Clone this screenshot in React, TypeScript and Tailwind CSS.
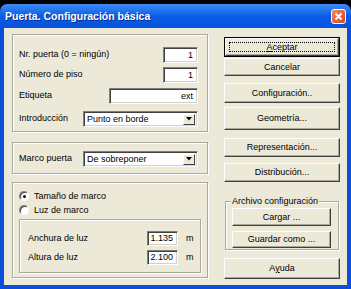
import React from 'react';

const font = { fontFamily: '"Liberation Sans", Arial, sans-serif' };

const Edit: React.FC<{ w: string; value: string; h?: string }> = ({ w, value, h = 'h-[16px]' }) => (
  <div className={`${w} ${h} box-border bg-white border border-t-[#7f7f7f] border-l-[#7f7f7f] border-b-white border-r-white shadow-[inset_1px_1px_0_#404040,inset_-1px_-1px_0_#d4d0c8] flex items-center justify-end pr-[4px] text-[9px] leading-none`}>
    {value}
  </div>
);

const Combo: React.FC<{ value: string }> = ({ value }) => (
  <div className="w-[115px] h-[16px] box-border bg-white border border-t-[#7f7f7f] border-l-[#7f7f7f] border-b-white border-r-white shadow-[inset_1px_1px_0_#404040,inset_-1px_-1px_0_#d4d0c8] flex items-center pl-[3px] pr-[2px] text-[9px] leading-none">
    <span className="flex-1">{value}</span>
    <div className="w-[12px] h-[11px] box-border bg-[#ece9d8] border border-t-white border-l-white border-r-[#404040] border-b-[#404040] flex items-center justify-center">
      <svg width="6" height="4" viewBox="0 0 6 4"><path d="M0 0h6L3 3.5z" fill="#000" /></svg>
    </div>
  </div>
);

const Group: React.FC<{ className?: string; children?: React.ReactNode }> = ({ className = '', children }) => (
  <div className={`box-border border border-[#aca899] shadow-[inset_1px_1px_0_#fff,1px_1px_0_#fff] ${className}`}>{children}</div>
);

const Btn: React.FC<{ h: string; className?: string; children: React.ReactNode }> = ({ h, className = '', children }) => (
  <div className={`${h} box-border bg-[#ece9d8] border border-t-white border-l-white border-r-[#404040] border-b-[#404040] shadow-[inset_-1px_-1px_0_#aca899] flex items-center justify-center text-[9px] leading-none ${className}`}>
    {children}
  </div>
);

const Radio: React.FC<{ checked?: boolean; label: string }> = ({ checked, label }) => (
  <div className="h-[14px] flex items-center">
    <div className="w-[10px] h-[10px] rounded-full bg-white border border-t-[#7f7f7f] border-l-[#7f7f7f] border-b-white border-r-white box-border flex items-center justify-center shadow-[inset_1px_1px_0_#404040]">
      {checked && <div className="w-[3px] h-[3px] rounded-full bg-black" />}
    </div>
    <span className="ml-[5px] text-[9px] leading-none">{label}</span>
  </div>
);

export default function App() {
  return (
    <div className="w-[351px] h-[289px] bg-black flex flex-col text-black" style={font}>
      <div className="h-[4px]" />
      {/* title bar */}
      <div className="h-[24px] rounded-t-[7px] bg-gradient-to-b from-[#3d8cf5] via-[#0a5ce8] to-[#0452dd] flex items-center pl-[5px] pr-[5px] pt-[1px]">
        <span className="text-white font-bold text-[10.5px] [text-shadow:1px_1px_0_#0a2a80]">Puerta. Configuración básica</span>
        <div className="ml-auto w-[15px] h-[15px] rounded-[3px] border border-white bg-gradient-to-br from-[#ee8a62] to-[#cf4420] flex items-center justify-center">
          <svg width="9" height="9" viewBox="0 0 9 9"><path d="M1.5 1.5l6 6M7.5 1.5l-6 6" stroke="#fff" strokeWidth="1.8" /></svg>
        </div>
      </div>
      {/* body */}
      <div className="flex-1 bg-[#ece9d8] border-x-4 border-b-4 border-[#0b4fd8] flex pl-[8px] pt-[6px]">
        {/* left */}
        <div className="w-[196px] flex flex-col">
          <Group className="h-[98px] pl-[6px] pr-[9px] pt-[12px] flex flex-col text-[9px]">
            <div className="h-[16px] flex items-center justify-between">
              <span>Nr. puerta (0 = ningún)</span>
              <Edit w="w-[35px]" value="1" />
            </div>
            <div className="h-[16px] mt-[4px] flex items-center justify-between">
              <span>Número de piso</span>
              <Edit w="w-[35px]" value="1" />
            </div>
            <div className="h-[16px] mt-[5px] flex items-center justify-between">
              <span>Etiqueta</span>
              <Edit w="w-[89px]" value="ext" />
            </div>
            <div className="h-[16px] mt-[7px] flex items-center justify-between">
              <span>Introducción</span>
              <Combo value="Punto en borde" />
            </div>
          </Group>
          <Group className="mt-[10px] h-[32px] pl-[6px] pr-[9px] pt-[8px] text-[9px]">
            <div className="h-[16px] flex items-center justify-between">
              <span>Marco puerta</span>
              <Combo value="De sobreponer" />
            </div>
          </Group>
          <Group className="mt-[8px] h-[96px] pl-[6px] pt-[6px] flex flex-col">
            <Radio checked label="Tamaño de marco" />
            <Radio label="Luz de marco" />
            <Group className="mt-[2px] w-[182px] h-[54px] pl-[8px] pt-[11px] flex flex-col text-[9px]">
              <div className="h-[15px] flex items-center">
                <span className="flex-1">Anchura de luz</span>
                <Edit w="w-[31px]" h="h-[15px]" value="1.135" />
                <span className="w-[22px] pl-[8px]">m</span>
              </div>
              <div className="h-[15px] mt-[4px] flex items-center">
                <span className="flex-1">Altura de luz</span>
                <Edit w="w-[31px]" h="h-[15px]" value="2.100" />
                <span className="w-[22px] pl-[8px]">m</span>
              </div>
            </Group>
          </Group>
        </div>
        {/* right */}
        <div className="ml-[16px] w-[116px] flex flex-col">
          <div className="mt-[3px] h-[20px] box-border border border-black">
            <Btn h="h-full" className="relative">
              <div className="absolute inset-[3px] border border-dotted border-black" />
              <span><span className="underline">A</span>ceptar</span>
            </Btn>
          </div>
          <Btn h="h-[18px]" className="mt-[1px]">Cancelar</Btn>
          <Btn h="h-[20px]" className="mt-[7px]">Configuración..</Btn>
          <Btn h="h-[23px]" className="mt-[4px]">Geometría...</Btn>
          <Btn h="h-[19px]" className="mt-[8px]">Representación...</Btn>
          <Btn h="h-[19px]" className="mt-[6px]">Distribución...</Btn>
          <Group className="relative mt-[19px] ml-[1px] w-[114px] h-[49px] pl-[6px] pt-[6px] flex flex-col">
            <span className="absolute left-[5px] top-[-5px] bg-[#ece9d8] px-[1px] text-[9px] leading-none">Archivo configuración</span>
            <Btn h="h-[18px]" className="w-[99px]">Cargar ...</Btn>
            <Btn h="h-[17px]" className="w-[99px] mt-[5px]">Guardar como ...</Btn>
          </Group>
          <Btn h="h-[21px]" className="mt-[8px]"><span>A<span className="underline">y</span>uda</span></Btn>
        </div>
      </div>
    </div>
  );
}
